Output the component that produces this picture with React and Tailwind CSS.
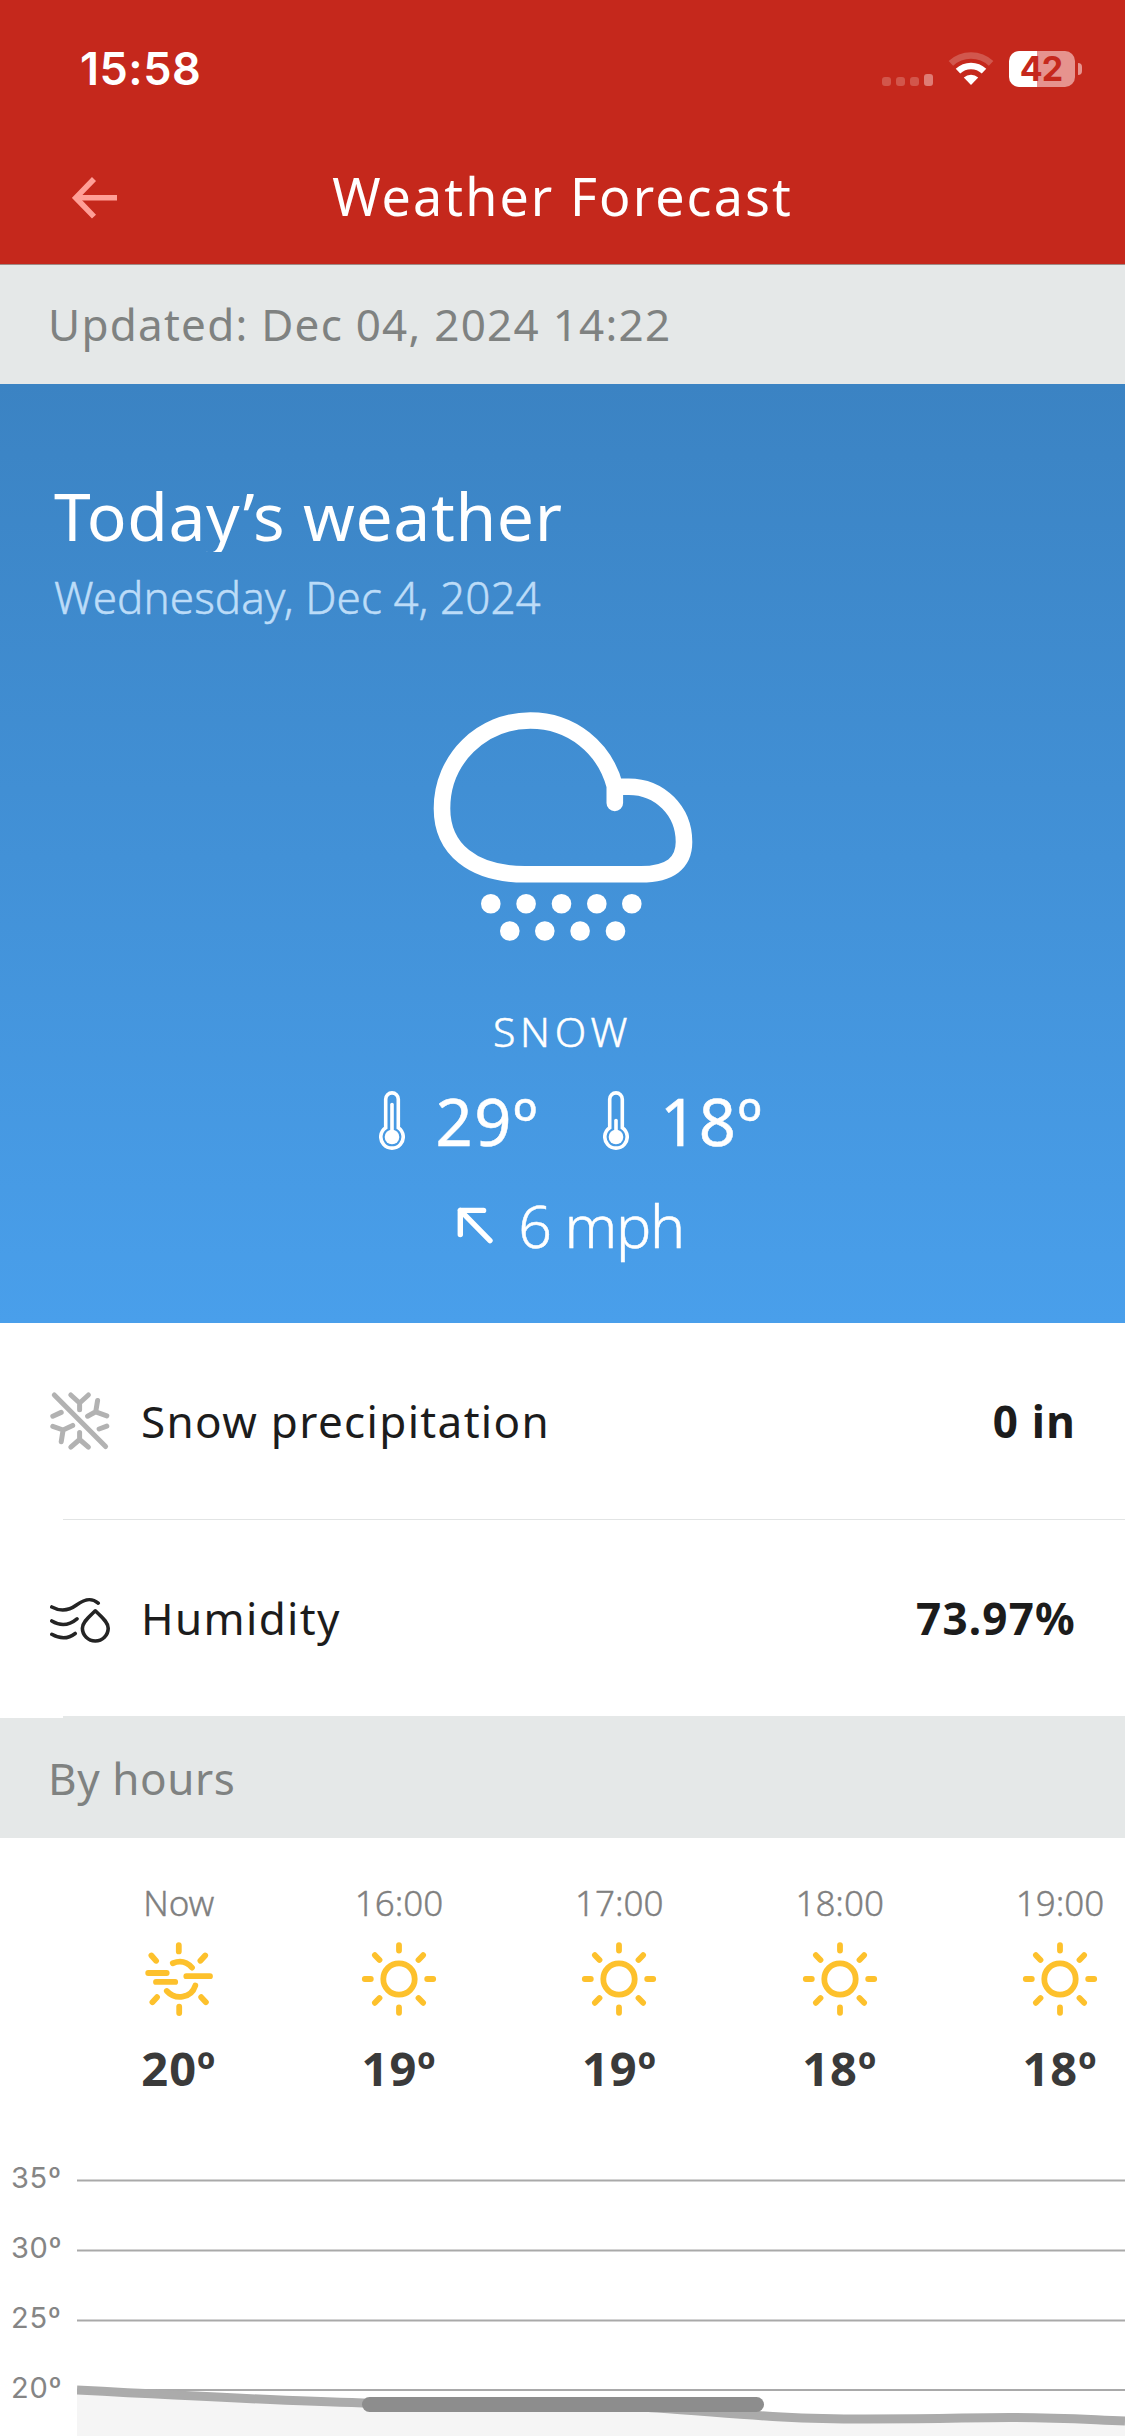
const HOURS = [
	{ time: 'Now', temp: '20º', hazy: true },
	{ time: '16:00', temp: '19º' },
	{ time: '17:00', temp: '19º' },
	{ time: '18:00', temp: '18º' },
	{ time: '19:00', temp: '18º' }
];

const CHART_LABELS = ['35º', '30º', '25º', '20º'];

const CHART_LINE = 'M0 290 C150 298 215 301 286 303 S500 302.5 580 308 S700 319 789 319 S885 317.5 933 317.5 S1000 319 1048 321';

const WifiIcon = () => (
	<svg width="46" height="34" viewBox="0 0 46 34" fill="none" stroke="#fff" strokeWidth="6.6">
		<path d="M2.9 11.4A29.5 29.5 0 0 1 43.1 11.4" opacity="0.22" />
		<path d="M10 19.1A19 19 0 0 1 36 19.1" />
		<path d="M23 33L15.8 25.5A10.5 10.5 0 0 1 30.2 25.5Z" fill="#fff" stroke="none" />
	</svg>
);

const BackIcon = () => (
	<svg width="46" height="42" viewBox="0 0 46 42" fill="none" stroke="#ff9f97" strokeWidth="5.6">
		<path d="M22 2L3.8 20.8L22 39.6" />
		<path d="M4 20.8H45" />
	</svg>
);

const SnowCloudIcon = () => (
	<svg width="320" height="280" viewBox="3.2 0 320 280" fill="none">
		<path
			d="M215 113V96C205 58 172 30.5 130.5 30.5C82 30.5 42.2 69 42.2 118.5C42.2 159 73 184.3 125 184.3H241C270 184.3 284.2 173 284.2 152C284.2 121 260 96.7 229 96.7H216"
			stroke="#fff"
			strokeWidth="16.6"
			strokeLinecap="round"
			strokeLinejoin="round"
		/>
		{[91, 126.3, 161.7, 197, 232].map((x) => (
			<circle key={x} cx={x} cy="213.7" r="9.8" fill="#fff" />
		))}
		{[110, 145, 180.3, 215.7].map((x) => (
			<circle key={x} cx={x} cy="241" r="9.8" fill="#fff" />
		))}
	</svg>
);

const ThermometerIcon = ({ level }) => (
	<svg className="shrink-0" width="26" height="60" viewBox="0 0 26 60" fill="none" stroke="#fff" strokeWidth="3.6">
		<path d="M6.7 36.7V8.2a6.3 6.3 0 0 1 12.6 0V36.7A11.2 11.2 0 1 1 6.7 36.7Z" />
		<path d={`M13 46V${level}`} strokeLinecap="round" />
		<circle cx="13" cy="46" r="7.3" fill="#fff" stroke="none" />
	</svg>
);

const WindArrowIcon = () => (
	<svg width="37" height="37" viewBox="0 0 37 37" fill="none" stroke="#fff" strokeWidth="5.4" strokeLinecap="round" strokeLinejoin="round">
		<path d="M3.3 27.5V3.4H26.6M3.3 3.4L33 33.6" />
	</svg>
);

const NoSnowIcon = () => (
	<svg width="60" height="60" viewBox="0 0 60 60" fill="none" stroke="#b2b2b2" strokeWidth="5" strokeLinecap="round" strokeLinejoin="round">
		<path d="M4.3 4L55.6 55.5" />
		<path d="M20.8 4L29.6 12L38.4 4M29.6 12V18.8" />
		<path d="M47.6 9.5L45.7 20.8L56.8 24.8M45.7 20.8L37.6 25.2" />
		<path d="M2.8 25.2L11.2 21.4" />
		<path d="M2.8 35.4L13.1 39L22.7 34.4M13.1 39L11.2 50.8" />
		<path d="M49.1 38L56.8 35.2" />
		<path d="M20.8 56.2L29.6 48.5L38.4 56.2M29.6 48.5V41.5" />
	</svg>
);

const HumidityIcon = () => (
	<svg width="60" height="60" viewBox="0 0 60 60" fill="none" stroke="#242424" strokeWidth="3.6" strokeLinecap="round" strokeLinejoin="round">
		<path d="M1.8 19C11 24 19 22.5 26.5 17C34 11.5 41 9 48.2 15.2" />
		<path d="M1.8 33C10 38 19 37.5 27 30.8" />
		<path d="M1.8 46.3C10 51 18 51 25.2 45.5" />
		<path d="M45.3 22.8C39 29 32.4 34 32.4 40.3a12.9 12.7 0 0 0 25.8 0C58.2 34 51.6 29 45.3 22.8Z" />
	</svg>
);

const SunIcon = () => (
	<svg width="80" height="80" viewBox="0 0 80 80" fill="none" stroke="#fdc12c" strokeWidth="5.8" strokeLinecap="round">
		<circle cx="40" cy="40" r="15.7" />
		<path d="M40 6.2V11.6M40 68.4V73.8M5.8 40H11.8M68.2 40H74.2" />
		<path d="M15.9 16.2L20.5 21M64.1 16.2L59.5 21M15.9 63.8L20.5 59M64.1 63.8L59.5 59" />
	</svg>
);

const HazySunIcon = () => (
	<svg width="80" height="80" viewBox="0 0 80 80" fill="none" stroke="#fdc12c" strokeWidth="5.8" strokeLinecap="round">
		<path d="M39.8 6.2V12.4M40.2 67.6V74" />
		<path d="M12.4 16.5L17.1 21.8M66.2 16.5L61.4 21.8M18 58.2L13.4 63.2M62.2 58.2L66.9 63.2" />
		<path d="M9.2 34H27.7M17 42.9H36.2M47.3 37.2H71" />
		<path d="M33.8 24.2C41 21.2 48 23 53 28.6" />
		<path d="M27.8 52C36 61 52 60 56.3 46.6" />
	</svg>
);

const StatusBar = () => (
	<div className="flex h-[132px] items-center justify-between pt-[5px] pr-[43px] pl-20">
		<span className="font-['Inter',sans-serif] text-[45px] font-semibold tracking-[0.5px]">15:58</span>
		<div className="flex items-center">
			<div className="flex h-[34px] items-end gap-[5px]">
				<i className="h-[9px] w-[9px] rounded-[3px] bg-[#d2564b]" />
				<i className="h-[9px] w-[9px] rounded-[3px] bg-[#d2564b]" />
				<i className="h-[9px] w-[9px] rounded-[3px] bg-[#d2564b]" />
				<i className="h-3 w-[9px] rounded-[3px] bg-[#df7c74]" />
			</div>
			<div className="ml-[15px]">
				<WifiIcon />
			</div>
			<div className="ml-[15px] flex h-9 w-[66px] items-center justify-center rounded-[10px] bg-[linear-gradient(90deg,#fff_28px,#e6938e_28px)] pr-[2px] font-['Inter',sans-serif] text-[34px] font-bold tracking-[-0.9px] text-[#c5281c]">
				42
			</div>
			<i className="ml-[3px] h-3 w-1 rounded-r-full bg-[#e6938e]" />
		</div>
	</div>
);

const SectionTitle = ({ children }) => (
	<div className="flex items-center bg-[#e5e8e8] px-12 text-[44px] text-[#7f8281]">{children}</div>
);

const DetailRow = ({ icon, label, value }) => (
	<div className="flex h-[196px] items-center pr-[49px] pl-[50px] text-[44px] text-[#1c1c1c]">
		{icon}
		<span className="ml-[31px] tracking-[1.35px]">{label}</span>
		<span className="ml-auto font-bold tracking-[1.2px]">{value}</span>
	</div>
);

export default function App() {
	return (
		<div className="h-[2436px] w-[1125px] overflow-hidden bg-white font-['Noto_Sans',sans-serif]">
			<header className="h-[265px] border-b border-[#a08a86] bg-[#c5281c] text-white">
				<StatusBar />
				<div className="grid h-[132px] grid-cols-[1fr_auto_1fr] items-center">
					<div className="pl-[72px]">
						<BackIcon />
					</div>
					<h1 className="pb-1 text-[52px] tracking-[2.1px]">Weather Forecast</h1>
				</div>
			</header>

			<div className="grid h-[119px] tracking-[1.25px]">
				<SectionTitle>
					<span className="pb-0.5">Updated: Dec 04, 2024 14:22</span>
				</SectionTitle>
			</div>

			<section className="h-[939px] bg-linear-to-b from-[#3b83c3] to-[#499feb] pt-[95px] text-white">
				<h2 className="h-[73px] overflow-hidden pl-[54px] text-[66px] leading-[72px] tracking-[0.6px]">Today’s weather</h2>
				<p className="mt-[15px] pl-[54px] text-[44px] leading-[60px] font-light tracking-[0.05px] text-[#bcdcf8] [-webkit-text-stroke:0.5px]">
					Wednesday, Dec 4, 2024
				</p>
				<div className="mt-[63px] flex justify-center">
					<SnowCloudIcon />
				</div>
				<p className="mt-[31px] text-center text-[41px] leading-[60px] font-light tracking-[4.7px] [-webkit-text-stroke:0.5px]">SNOW</p>
				<div className="mt-4 flex items-center justify-center pl-[18px] text-[65px] leading-[88px] tracking-[1.6px] [-webkit-text-stroke:0.5px]">
					<ThermometerIcon level={13.5} />
					<span className="ml-[30px]">29º</span>
					<div className="ml-16">
						<ThermometerIcon level={29.5} />
					</div>
					<span className="ml-[31px]">18º</span>
				</div>
				<div className="mt-5 flex items-center justify-center gap-6 pl-4 text-[59px] leading-[80px] font-light tracking-[-1.4px] [-webkit-text-stroke:0.5px]">
					<WindArrowIcon />
					<span>6 mph</span>
				</div>
			</section>

			<DetailRow icon={<NoSnowIcon />} label="Snow precipitation" value="0 in" />
			<div className="ml-[63px] h-px bg-[#e2e4e4]" />
			<DetailRow icon={<HumidityIcon />} label="Humidity" value="73.97%" />
			<div className="ml-[63px] h-0.5 bg-[#e5e8e8]" />

			<div className="grid h-[120px] tracking-[0.6px]">
				<SectionTitle>By hours</SectionTitle>
			</div>

			<div className="flex h-[262px] overflow-hidden pt-[41px] pl-[68.6px]">
				{HOURS.map(({ time, temp, hazy }) => (
					<div key={time} className="flex w-[220.3px] shrink-0 flex-col items-center">
						<span className="text-[35px] leading-[48px] font-light text-[#808080] [-webkit-text-stroke:0.4px]">{time}</span>
						<div className="mt-3">{hazy ? <HazySunIcon /> : <SunIcon />}</div>
						<span className="mt-[17px] text-[47px] leading-[64px] font-bold tracking-[1px] text-[#3a3a3a]">{temp}</span>
					</div>
				))}
			</div>

			<div className="relative flex h-[336px] overflow-hidden">
				<div className="w-[77px] shrink-0 pt-[43px] pl-[11px] font-['Inter',sans-serif] text-[29px] leading-[70px] tracking-[0.7px] text-[#858585]">
					{CHART_LABELS.map((label) => (
						<div key={label}>{label}</div>
					))}
				</div>
				<svg width="1048" height="336" viewBox="0 0 1048 336" fill="none">
					<path d={`${CHART_LINE}V336H0Z`} fill="#f5f5f5" />
					<path d="M0 80.5H1048M0 150.5H1048M0 220.5H1048M0 290H1048" stroke="#a9a9a9" strokeWidth="2" />
					<path d={CHART_LINE} stroke="#ababab" strokeWidth="9" />
				</svg>
				{/* home indicator, floats over the chart */}
				<div className="absolute top-[297px] left-[362px] h-[15px] w-[402px] rounded-full bg-[#8d8d8d]" />
			</div>
		</div>
	);
}
